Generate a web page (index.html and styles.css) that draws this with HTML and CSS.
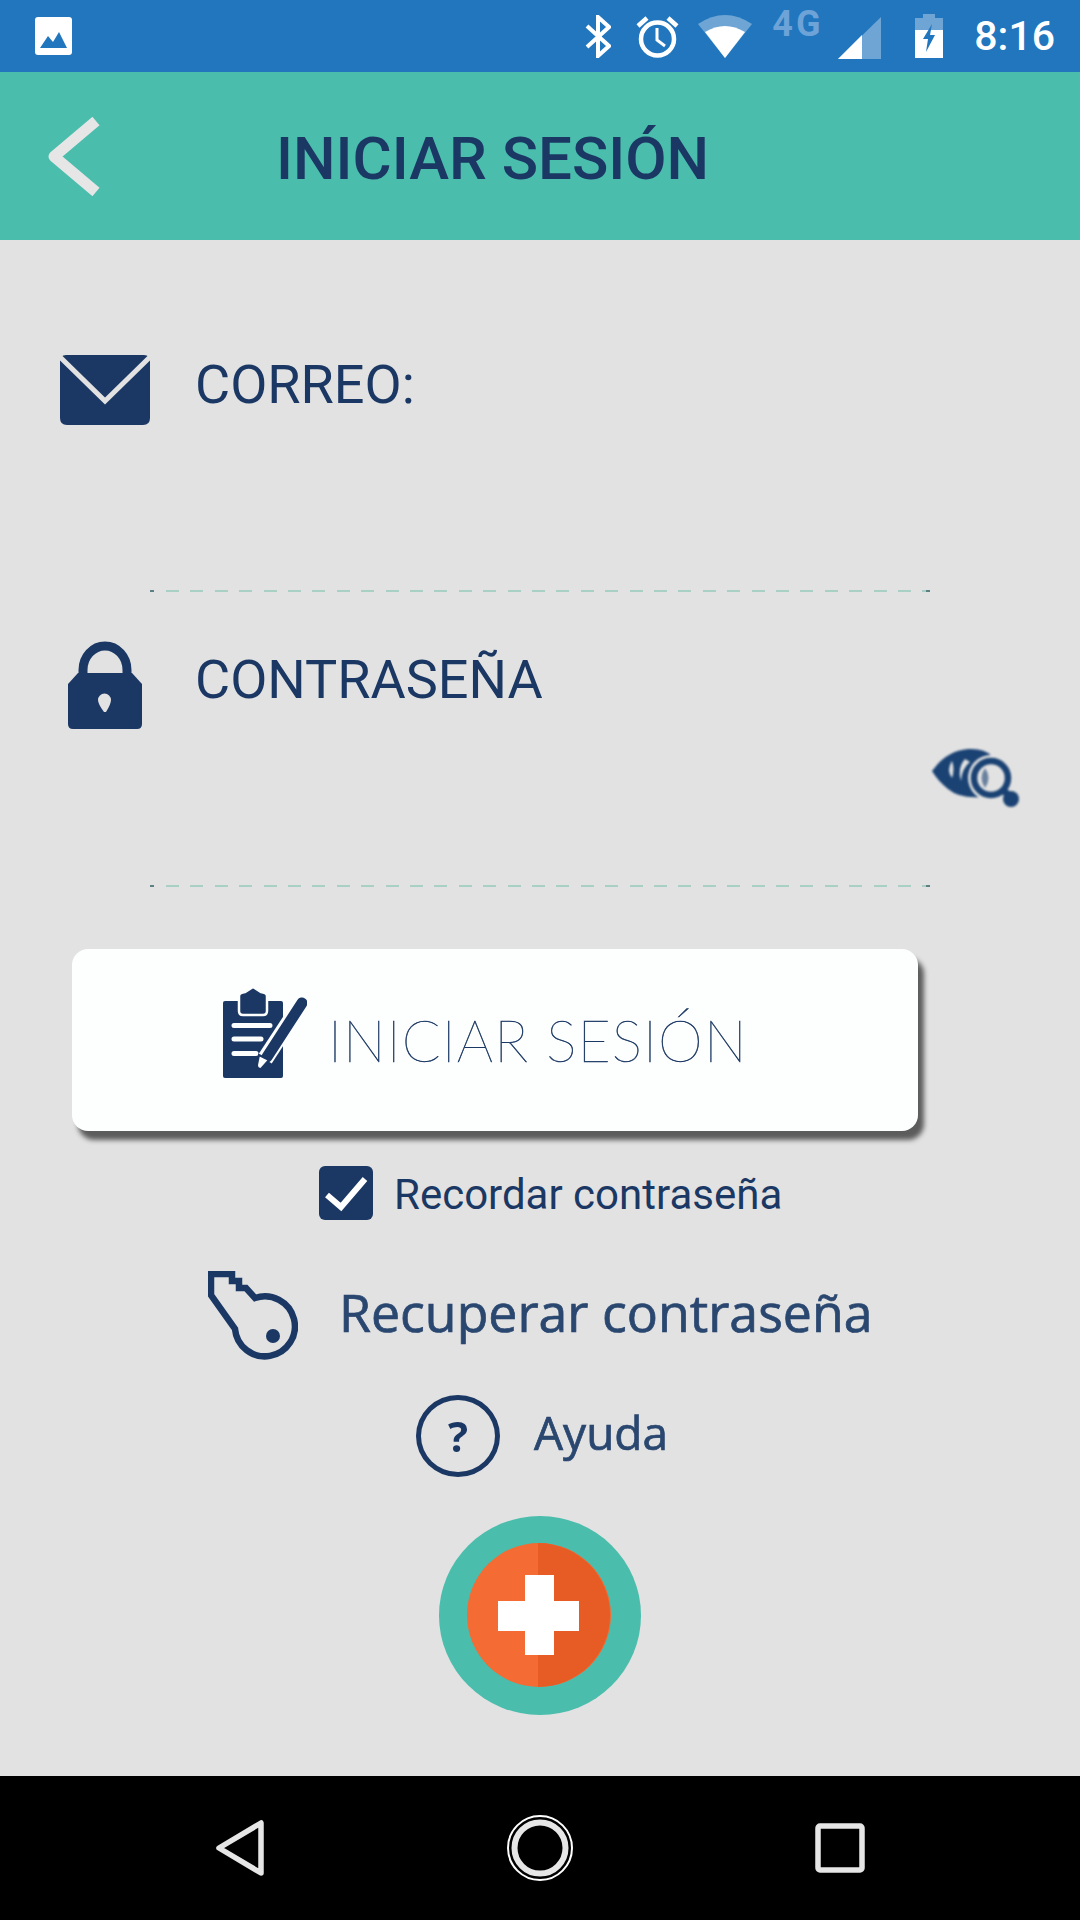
FILE: index.html
```html
<!DOCTYPE html>
<html lang="es">

<head>
    <meta charset="UTF-8">
    <meta name="viewport" content="width=device-width, initial-scale=1.0">
    <title>Iniciar sesión</title>
    <link rel="stylesheet" href="styles.css">
</head>

<body>
    <div class="screen">

        <div class="status-bar">
            <svg class="st-image" width="37" height="38" viewBox="0 0 37 38">
                <rect width="37" height="38" rx="3" fill="#fff"/>
                <path d="M5 31 L13 19 L18 25 L24 15 L32 31 Z" fill="#2176be"/>
            </svg>
            <div class="status-icons">
                <svg class="st-bt" width="26" height="43" viewBox="0 0 26 43">
                    <path d="M2 11 L24 31 L13 41 V2 L24 12 L2 32" fill="none" stroke="#fff" stroke-width="4"/>
                </svg>
                <svg class="st-alarm" width="45" height="43" viewBox="0 0 45 43">
                    <circle cx="22.500" cy="24" r="16.500" fill="none" stroke="#fff" stroke-width="4.500"/>
                    <path d="M22 13 V25 L30 31" fill="none" stroke="#fff" stroke-width="3"/>
                    <path d="M3 11 L12 3 M42 11 L33 3" stroke="#fff" stroke-width="4.500"/>
                </svg>
                <svg class="st-wifi" width="54" height="43" viewBox="0 0 54 43">
                    <path d="M0 9 Q27 -9 54 9 L27 43 Z" fill="#fff" fill-opacity=".35"/>
                    <path d="M7 17 Q27 5 47 17 L27 43 Z" fill="#fff"/>
                </svg>
                <span class="st-net">4G</span>
                <svg class="st-signal" width="43" height="42" viewBox="0 0 43 42">
                    <path d="M0 42 L43 0 V42 Z" fill="#fff" fill-opacity=".35"/>
                    <path d="M0 42 L24 18 V42 Z" fill="#fff"/>
                </svg>
                <svg class="st-battery" width="28" height="44" viewBox="0 0 28 44">
                    <path d="M8 0 H20 V4 H28 V16 H0 V4 H8 Z" fill="#fff" fill-opacity=".35"/>
                    <path d="M0 16 H28 V44 H0 Z" fill="#fff"/>
                    <path d="M17 10 L8 25 H13 L11 38 L20 21 H15 Z" fill="#2176be"/>
                </svg>
                <span class="st-time">8:16</span>
            </div>
        </div>

        <div class="app-bar">
            <svg class="back-icon" width="53" height="79" viewBox="0 0 53 79">
                <path d="M49 4 L7 39.500 L49 75" fill="none" stroke="#e6e6e6" stroke-width="11" stroke-linejoin="round"/>
            </svg>
            <h1 class="app-title">INICIAR SESIÓN</h1>
        </div>

        <div class="content">
            <div class="field field-mail">
                <div class="field-head">
                    <div class="field-icon">
                        <svg class="icon-soft" width="90" height="70" viewBox="0 0 90 70">
                            <path d="M6 0 H84 Q90 0 90 6 V63 Q90 70 83 70 H7 Q0 70 0 63 V6 Q0 0 6 0 Z" fill="#1b3864"/>
                            <path d="M0 2 L45 46 L90 2" fill="none" stroke="#e2e2e2" stroke-width="5"/>
                        </svg>
                    </div>
                    <div class="field-label">CORREO:</div>
                </div>
                <div class="rule rule-mail"></div>
            </div>

            <div class="field field-pass">
                <div class="field-head">
                    <div class="field-icon">
                        <svg class="icon-soft" width="74" height="89" viewBox="0 0 74 89">
                            <path d="M15 36 V30 A22 24 0 0 1 59 30 V36" fill="none" stroke="#1b3864" stroke-width="9"/>
                            <path d="M10 33 H64 L74 44 V84 Q74 89 69 89 H5 Q0 89 0 84 V44 Z" fill="#1b3864"/>
                            <path d="M30 60 A6.500 6.500 0 0 1 43 60 Q43 64 38 72 H36 Q30 64 30 60 Z" fill="#e2e2e2"/>
                        </svg>
                    </div>
                    <div class="field-label field-label-pass">CONTRASEÑA</div>
                </div>
                <div class="eye-row">
                    <svg class="eye-icon" width="87" height="59" viewBox="0 0 87 59">
                        <path d="M0 23 Q14 3 36 1 Q52 0 60 8 L50 49 Q28 51 16 41 Q6 33 0 23 Z" fill="#1a4273"/>
                        <path d="M20 13 Q14 22 20 30 Q23 21 20 13 Z" fill="#e2e2e2"/>
                        <path d="M33 11 Q25 20 29 33 Q30 20 38 14 Z" fill="#e2e2e2"/>
                        <circle cx="59" cy="30" r="23" fill="#e2e2e2"/>
                        <circle cx="59" cy="30" r="17" fill="#e2e2e2" stroke="#1a4273" stroke-width="6.500"/>
                        <path d="M53 20 Q46 30 53 40 Q60 30 53 20 Z" fill="#1a4273" fill-opacity=".6"/>
                        <path d="M71 42 L82 52" stroke="#1a4273" stroke-width="7"/>
                        <circle cx="79" cy="51" r="8" fill="#1a4273"/>
                    </svg>
                </div>
                <div class="rule rule-pass"></div>
            </div>

            <button class="login-btn" type="button">
                <svg class="login-icon" width="84" height="91" viewBox="0 0 84 91">
                    <rect x="0" y="14" width="60" height="77" rx="2" fill="#1b3864"/>
                    <path d="M16 24 V9 Q16 6 22 5 L30 0 L38 5 Q44 6 44 9 V24 Q44 28 40 28 H20 Q16 28 16 24 Z" fill="#1b3864" stroke="#fdfefe" stroke-width="2.500"/>
                    <path d="M11 38.500 H47 M11 52 H38 M11 66.500 H33" stroke="#fdfefe" stroke-width="5" stroke-linecap="round"/>
                    <path d="M78 17 L42 72" stroke="#fdfefe" stroke-width="16"/>
                    <path d="M79 16 L44 70" stroke="#1b3864" stroke-width="11" stroke-linecap="round"/>
                    <path d="M36 68 L46 73 L38 82 Q34 82 34 78 Z" fill="#fdfefe" stroke="#1b3864" stroke-width="2"/>
                </svg>
                <span class="login-text">INICIAR SESIÓN</span>
            </button>

            <div class="remember">
                <svg width="54" height="54" viewBox="0 0 54 54">
                    <rect width="54" height="54" rx="6" fill="#1b3864"/>
                    <path d="M8 29 L22 41 L46 13" fill="none" stroke="#fff" stroke-width="6"/>
                </svg>
                <span class="remember-text">Recordar contraseña</span>
            </div>

            <div class="recover">
                <svg class="soft" width="90" height="89" viewBox="0 0 90 89">
                    <path d="M3 3 H24 V10 H31 V17 H38 L47 27 A30 30 0 1 1 27 58 L3 24 Z" fill="none" stroke="#1b3864" stroke-width="6.500"/>
                    <circle cx="65" cy="65" r="7" fill="#1b3864"/>
                </svg>
                <span class="recover-text soft">Recuperar contraseña</span>
            </div>

            <div class="help">
                <div class="help-mark soft">?</div>
                <span class="help-text soft">Ayuda</span>
            </div>

            <div class="plus">
                <svg width="202" height="199" viewBox="0 0 202 199">
                    <ellipse cx="101" cy="99.500" rx="101" ry="99.500" fill="#4abdac"/>
                    <circle cx="100" cy="99" r="72" fill="#f46b33"/>
                    <path d="M99 27 A72 72 0 0 1 99 171 Z" fill="#e75c25"/>
                    <path d="M86 59 H115 V85 H140 V115 H115 V139 H86 V115 H59 V85 H86 Z" fill="#fff"/>
                </svg>
            </div>
        </div>

        <div class="nav-bar">
            <svg width="48" height="56" viewBox="0 0 48 56">
                <path d="M45 3 V53 L3 28 Z" fill="none" stroke="#e6e6e6" stroke-width="5.500" stroke-linejoin="round"/>
            </svg>
            <svg width="66" height="66" viewBox="0 0 66 66">
                <circle cx="33" cy="33" r="32" fill="none" stroke="#fff" stroke-width="2"/>
                <circle cx="33" cy="33" r="25.500" fill="none" stroke="#e6e6e6" stroke-width="6"/>
            </svg>
            <svg width="50" height="50" viewBox="0 0 50 50">
                <rect x="3" y="3" width="44" height="44" rx="2" fill="none" stroke="#e6e6e6" stroke-width="5.500"/>
            </svg>
        </div>

    </div>
</body>

</html>
```

FILE: styles.css
```css
* {
    box-sizing: border-box;
}

body {
    margin: 0;
    background-color: #e2e2e2;
    font-family: Roboto, "Liberation Sans", sans-serif;
    color: #1b3864;
}

svg {
    display: block;
    flex: none;
}

.screen {
    width: 1080px;
    height: 1920px;
    display: flex;
    flex-direction: column;
    overflow: hidden;
}

.status-bar {
    height: 72px;
    flex: none;
    display: flex;
    align-items: center;
    justify-content: space-between;
    padding: 0 25px 0 35px;
    background-color: #2176be;
}

.status-icons {
    display: flex;
    align-items: center;
}

.st-alarm {
    margin-left: 24px;
}

.st-wifi {
    margin-left: 18px;
}

.st-net {
    width: 52px;
    margin-left: 20px;
    margin-bottom: 24px;
    font-size: 36px;
    line-height: 34px;
    font-weight: 700;
    letter-spacing: 3px;
    color: #6ea3d8;
}

.st-signal {
    margin-left: 14px;
    margin-top: 4px;
}

.st-battery {
    margin-left: 34px;
}

.st-time {
    margin-left: 31px;
    font-size: 41px;
    line-height: 40px;
    font-weight: 500;
    color: #fff;
}

.app-bar {
    height: 168px;
    flex: none;
    display: flex;
    align-items: center;
    padding-left: 47px;
    background-color: #4abdac;
}

.back-icon {
    filter: blur(.7px);
}

.app-title {
    margin: 5px 0 0 176px;
    font-size: 60px;
    line-height: 60px;
    font-weight: 500;
}

.content {
    flex: 1;
    padding-left: 60px;
}

.field-mail {
    padding-top: 115px;
}

.field-pass {
    padding-top: 48px;
}

.field-head {
    display: flex;
}

.field-icon {
    width: 90px;
    display: flex;
    justify-content: center;
}

.icon-soft {
    filter: blur(.5px);
}

.field-label {
    margin: 3px 0 0 45px;
    font-size: 54px;
    line-height: 54px;
}

.field-label-pass {
    margin-top: 13px;
}

.eye-row {
    display: flex;
    justify-content: flex-end;
    margin-top: 19px;
    padding-right: 61px;
}

.eye-icon {
    filter: blur(.8px);
}

.rule {
    width: 780px;
    height: 2px;
    margin-left: 90px;
    background:
        linear-gradient(#5d7f86, #5d7f86) 0 0 / 4px 2px no-repeat,
        linear-gradient(#5d7f86, #5d7f86) 776px 0 / 4px 2px no-repeat,
        repeating-linear-gradient(90deg, #a9d0c5 0, #a9d0c5 13px, transparent 13px, transparent 24.400px) 16px 0 / 760px 2px no-repeat;
}

.rule-mail {
    margin-top: 165px;
}

.rule-pass {
    margin-top: 78px;
}

.login-btn {
    width: 846px;
    height: 182px;
    margin: 62px 0 0 12px;
    display: flex;
    align-items: center;
    gap: 21px;
    padding: 0 0 0 151px;
    border: none;
    border-radius: 16px;
    background-color: #fdfefe;
    box-shadow: 6px 9px 5px #5c5c5c;
    color: #1b3864;
    font-family: inherit;
}

.login-icon {
    margin-bottom: 16px;
}

.login-text {
    font-family: Lato, Inter, sans-serif;
    font-size: 57px;
    line-height: 56px;
    font-weight: 100;
    letter-spacing: 1.100px;
    -webkit-text-stroke: .5px #1b3864;
    white-space: nowrap;
}

.remember {
    display: flex;
    align-items: center;
    gap: 21px;
    margin-top: 35px;
    padding-left: 259px;
}

.remember-text {
    margin-top: 4px;
    font-size: 42px;
    line-height: 50px;
}

.recover {
    display: flex;
    align-items: center;
    gap: 41px;
    margin-top: 51px;
    padding-left: 148px;
}

.recover-text {
    margin-top: -7px;
    font-family: "Open Sans", sans-serif;
    font-size: 51.800px;
    line-height: 60px;
    -webkit-text-stroke: .7px #2a4770;
    color: #2a4770;
}

.soft {
    filter: blur(.7px);
}

.help {
    display: flex;
    align-items: center;
    gap: 34px;
    margin-top: 35px;
    padding-left: 356px;
}

.help-mark {
    width: 84px;
    height: 82px;
    display: flex;
    align-items: center;
    justify-content: center;
    border: 5px solid #1b3864;
    border-radius: 50%;
    font-family: "Open Sans", sans-serif;
    font-size: 42px;
    line-height: 42px;
    font-weight: 700;
}

.help-text {
    margin-top: -9px;
    font-family: "Open Sans", sans-serif;
    font-size: 46px;
    line-height: 60px;
    -webkit-text-stroke: .7px #2a4770;
    color: #2a4770;
}

.plus {
    margin-top: 39px;
    padding-left: 379px;
}

.nav-bar {
    height: 144px;
    flex: none;
    display: flex;
    align-items: center;
    padding: 0 215px 0 216px;
    justify-content: space-between;
    background-color: #000;
}
```
